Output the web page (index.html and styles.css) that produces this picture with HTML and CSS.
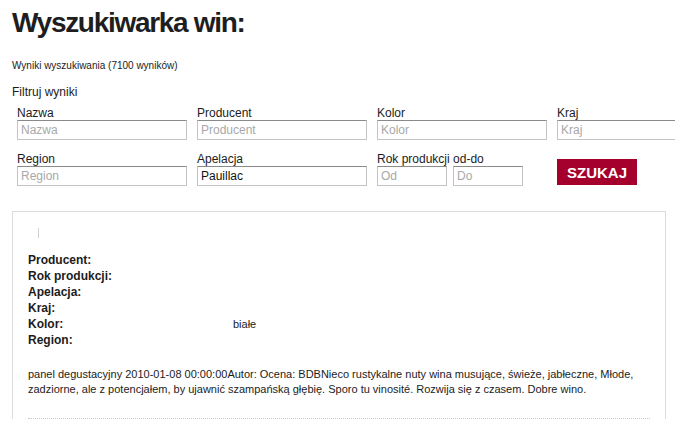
FILE: index.html
```html
<!DOCTYPE html>
<html lang="pl">
<head>
    <meta charset="UTF-8">
    <meta name="viewport" content="width=device-width, initial-scale=1.0">
    <title>Wyszukiwarka win</title>
    <link rel="stylesheet" href="styles.css">
</head>
<body>
    <h1 class="title">Wyszukiwarka win:</h1>
    <p class="count">Wyniki wyszukiwania (7100 wyników)</p>

    <form class="filters">
        <div class="filters-head">Filtruj wyniki</div>
        <div class="filter-grid">
            <label class="field">
                <span>Nazwa</span>
                <input type="text" placeholder="Nazwa">
            </label>
            <label class="field">
                <span>Producent</span>
                <input type="text" placeholder="Producent">
            </label>
            <label class="field">
                <span>Kolor</span>
                <input type="text" placeholder="Kolor">
            </label>
            <label class="field">
                <span>Kraj</span>
                <input type="text" placeholder="Kraj">
            </label>
            <label class="field">
                <span>Region</span>
                <input type="text" placeholder="Region">
            </label>
            <label class="field">
                <span>Apelacja</span>
                <input type="text" placeholder="Apelacja" value="Pauillac">
            </label>
            <div class="field">
                <span>Rok produkcji od-do</span>
                <div class="years">
                    <input type="text" placeholder="Od">
                    <input type="text" placeholder="Do">
                </div>
            </div>
            <div class="submit-cell">
                <button type="submit" class="btn-search">SZUKAJ</button>
            </div>
        </div>
    </form>

    <div class="results">
        <div class="wine">
            <span class="wine-thumb"></span>
            <dl class="wine-info">
                <dt>Producent:</dt><dd></dd>
                <dt>Rok produkcji:</dt><dd></dd>
                <dt>Apelacja:</dt><dd></dd>
                <dt>Kraj:</dt><dd></dd>
                <dt>Kolor:</dt><dd>białe</dd>
                <dt>Region:</dt><dd></dd>
            </dl>
            <p class="wine-note">panel degustacyjny 2010-01-08 00:00:00Autor: Ocena: BDBNieco rustykalne nuty wina musujące, świeże, jabłeczne, Młode, zadziorne, ale z potencjałem, by ujawnić szampańską głębię. Sporo tu vinosité. Rozwija się z czasem. Dobre wino.</p>
        </div>
    </div>
</body>
</html>
```

FILE: styles.css
```css
/* ogólne */
html, body {
    overflow: hidden;
}
body {
    font-family: "Liberation Sans", Arial, sans-serif;
    background-color: #ffffff;
    color: #1c1c1c;
    margin: 0;
    padding: 0 0 0 12px;
}

/* nagłówek */
.title {
    font-size: 28px;
    line-height: 34px;
    font-weight: bold;
    letter-spacing: -1.3px;
    color: #1e1e1e;
    margin: 6px 0 0;
}
.count {
    font-size: 10px;
    line-height: 12px;
    margin: 20px 0 0;
}

/* filtry */
.filters {
    margin-top: 13px;
    overflow: hidden; /* pole Kraj wychodzi poza ekran */
}
.filters-head {
    font-size: 12px;
    line-height: 14px;
}
.filter-grid {
    display: grid;
    grid-template-columns: repeat(4, 170px);
    column-gap: 10px;
    row-gap: 12px;
    margin: 7px 0 0 5px;
}
.field {
    display: flex;
    flex-direction: column;
}
.field span {
    font-size: 12px;
    line-height: 14px;
}
.field input {
    box-sizing: border-box;
    width: 170px;
    height: 20px;
    margin: 0;
    padding: 0 3px;
    border: 1px solid #c4c4c4;
    border-top-color: #8a8a8a;
    font-family: "Liberation Sans", Arial, sans-serif;
    font-size: 12px;
    color: #111;
    background: #fff;
}
.field input::placeholder {
    color: #a8a8a8;
}
.years {
    display: flex;
    gap: 6px;
}
.years input {
    width: 70px;
}
.submit-cell {
    display: flex;
    align-items: flex-end;
    padding-bottom: 1px;
}
.btn-search {
    width: 80px;
    height: 26px;
    border: none;
    padding: 0;
    background-color: #a5002d;
    color: #fff;
    font-family: "Liberation Sans", Arial, sans-serif;
    font-size: 15px;
    font-weight: bold;
    cursor: pointer;
}

/* wyniki */
.results {
    box-sizing: border-box;
    width: 654px;
    margin-top: 25px;
    border: 1px solid #dcdcdc;
    border-bottom: none;
    padding: 16px 15px 0;
}
.wine {
    border-bottom: 1px dotted #c8c8c8;
    padding-bottom: 21px;
}
.wine-thumb {
    display: block;
    width: 1px;
    height: 10px;
    margin-left: 10px;
    background: #cfcfcf;
}
.wine-info {
    display: grid;
    grid-template-columns: 205px 1fr;
    margin: 14px 0 0;
    font-size: 12px;
    line-height: 16px;
}
.wine-info dt {
    font-weight: bold;
}
.wine-info dd {
    margin: 0;
    font-size: 11px;
}
.wine-note {
    font-size: 11px;
    line-height: 15px;
    margin: 19px 0 0;
}
```
